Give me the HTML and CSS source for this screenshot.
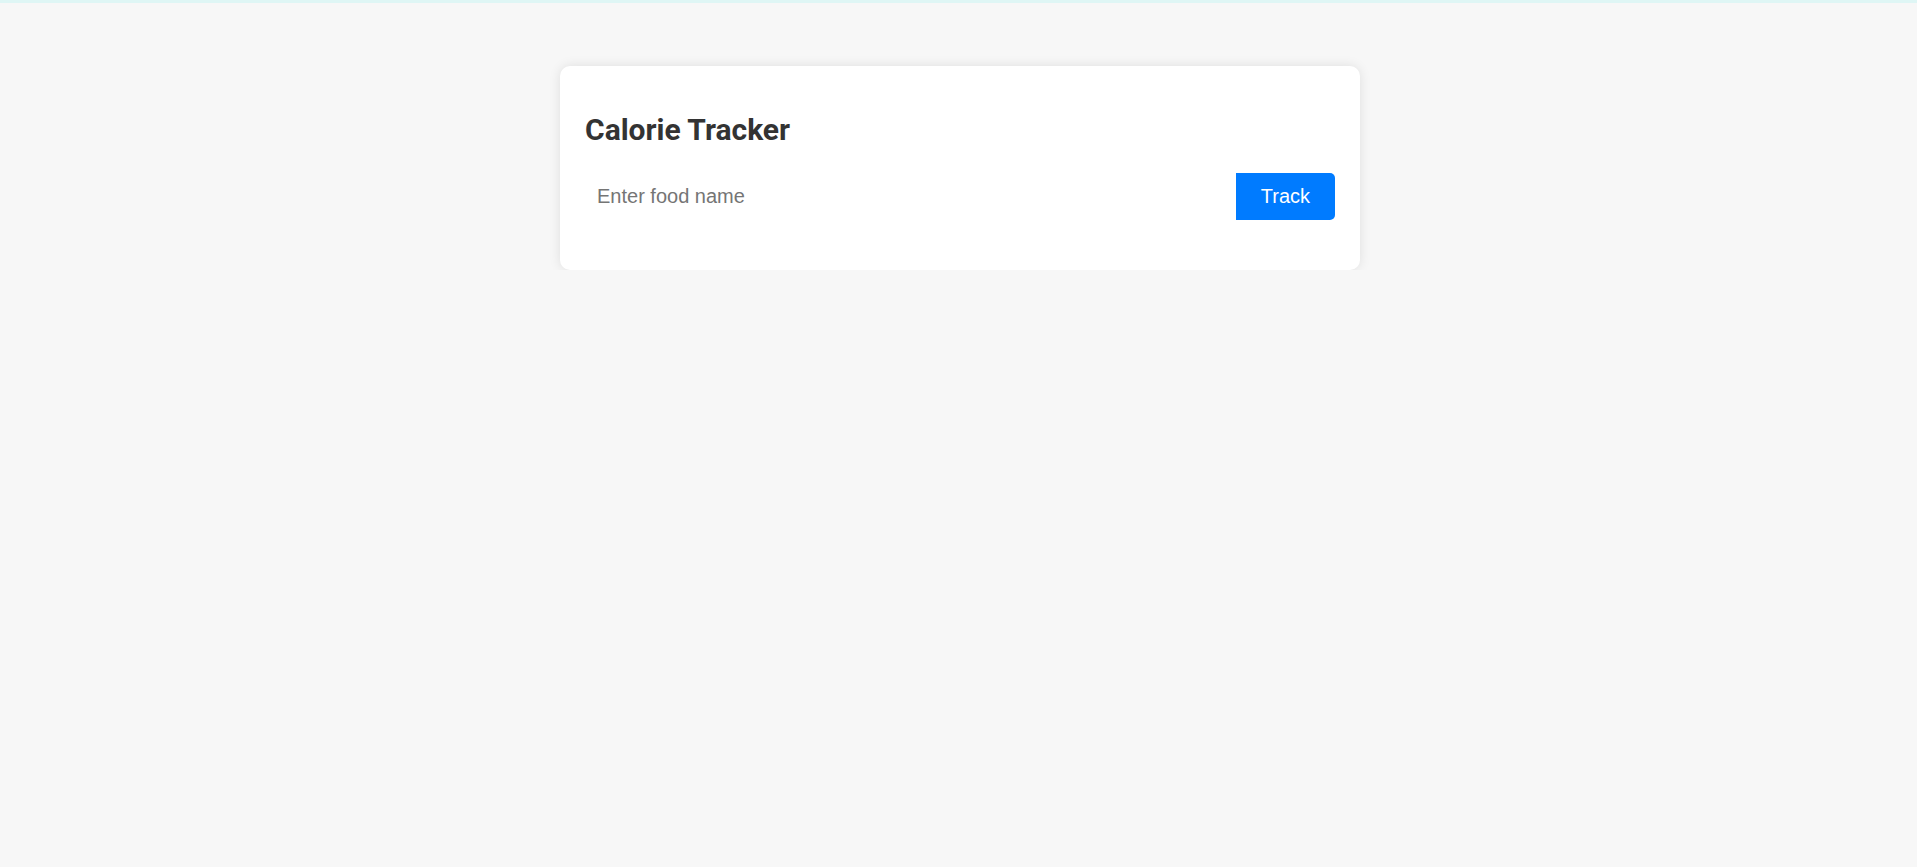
FILE: index.html
```html
<!DOCTYPE html>
<html>
<head>
<meta charset="utf-8">
<title>Calorie Tracker</title>
<link rel="stylesheet" href="styles.css">
</head>
<body>
<div class="page">
  <div class="card">
    <h1 class="title">Calorie Tracker</h1>
    <form class="input-group">
      <input class="food-input" type="text" placeholder="Enter food name">
      <button class="track-btn" type="button">Track</button>
    </form>
  </div>
</div>
</body>
</html>
```
FILE: styles.css
```css
html {
  background: #f7f7f7;
}
html, body {
  margin: 0;
  padding: 0;
}
body {
  background: #f7f7f7;
  border-top: 3px solid #dff6f5;
  font-family: "Liberation Sans", Arial, sans-serif;
}
.page {
  display: flex;
  justify-content: center;
  padding: 63px 0 0 3px;
}
.card {
  width: 800px;
  box-sizing: border-box;
  background: #fff;
  border-radius: 10px;
  padding: 25px;
  box-shadow: 0 0 12px rgba(0, 0, 0, 0.1);
}
.title {
  margin: 21px 0 26px;
  font-family: Roboto, "Liberation Sans", sans-serif;
  font-weight: 700;
  font-size: 30px;
  line-height: 35px;
  color: #333;
}
.input-group {
  display: flex;
  margin: 0 0 25px;
}
.food-input {
  flex: 1;
  border: none;
  outline: none;
  padding: 12px;
  font-family: "Liberation Sans", Arial, sans-serif;
  font-size: 20px;
  line-height: 23px;
  color: #333;
  background: #fff;
}
.food-input::placeholder {
  color: #757575;
}
.track-btn {
  width: 99px;
  border: none;
  background: #007bff;
  color: #fff;
  padding: 12px 0;
  font-family: "Liberation Sans", Arial, sans-serif;
  font-size: 20px;
  line-height: 23px;
  border-radius: 0 5px 5px 0;
  cursor: pointer;
}
```
